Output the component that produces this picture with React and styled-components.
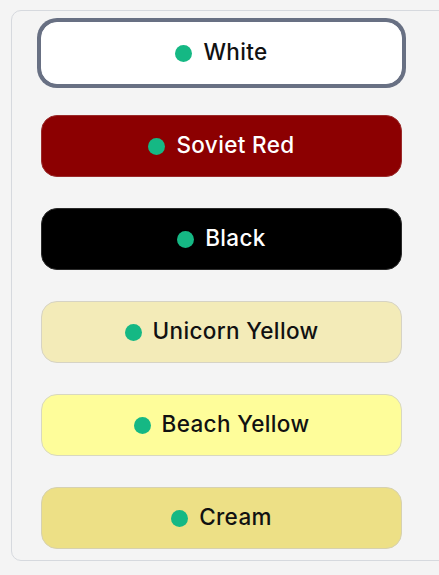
import React from "react";
import styled, { createGlobalStyle } from "styled-components";

const Global = createGlobalStyle`
  html, body { margin: 0; padding: 0; background: #f4f4f4; overflow: hidden; }
  body { font-family: "Inter", "Liberation Sans", sans-serif; }
`;

const Panel = styled.div`
  margin: 10px 0 0 11px;
  width: 470px;
  box-sizing: border-box;
  border: 1px solid #d6d9de;
  border-radius: 10px;
  background: #f4f4f4;
  padding: 11px 0 11px 29px;
  display: flex;
  flex-direction: column;
  gap: 31px;
`;

const ColorButton = styled.button`
  width: 361px;
  height: 62px;
  box-sizing: border-box;
  border-radius: 16px;
  border: 1px solid ${(p) => p.$border};
  background: ${(p) => p.$bg};
  color: ${(p) => p.$fg};
  box-shadow: ${(p) => (p.$selected ? "0 0 0 4px #687083" : "none")};
  display: flex;
  align-items: center;
  justify-content: center;
  gap: 11px;
  padding: 0 0 3px 0;
  font-family: "Inter", "Liberation Sans", sans-serif;
  font-size: 22.5px;
  font-weight: 500;
  letter-spacing: 0.35px;
  cursor: pointer;
`;

const Dot = styled.span`
  width: 17px;
  height: 17px;
  border-radius: 50%;
  background: #15b884;
  flex: none;
  margin-top: 4px;
`;

const colors = [
  { name: "White", bg: "#ffffff", fg: "#111111", border: "#ffffff", selected: true },
  { name: "Soviet Red", bg: "#8c0001", fg: "#ffffff", border: "#9a2a2a" },
  { name: "Black", bg: "#000000", fg: "#ffffff", border: "#2a2a2a" },
  { name: "Unicorn Yellow", bg: "#f3ebb8", fg: "#111111", border: "#d6d3c4" },
  { name: "Beach Yellow", bg: "#fefd9a", fg: "#111111", border: "#d8d8c0" },
  { name: "Cream", bg: "#ede086", fg: "#111111", border: "#d6d1b0" },
];

export default function App() {
  return (
    <>
      <Global />
      <Panel>
        {colors.map((c) => (
          <ColorButton
            key={c.name}
            $bg={c.bg}
            $fg={c.fg}
            $border={c.border}
            $selected={c.selected}
          >
            <Dot />
            {c.name}
          </ColorButton>
        ))}
      </Panel>
    </>
  );
}
